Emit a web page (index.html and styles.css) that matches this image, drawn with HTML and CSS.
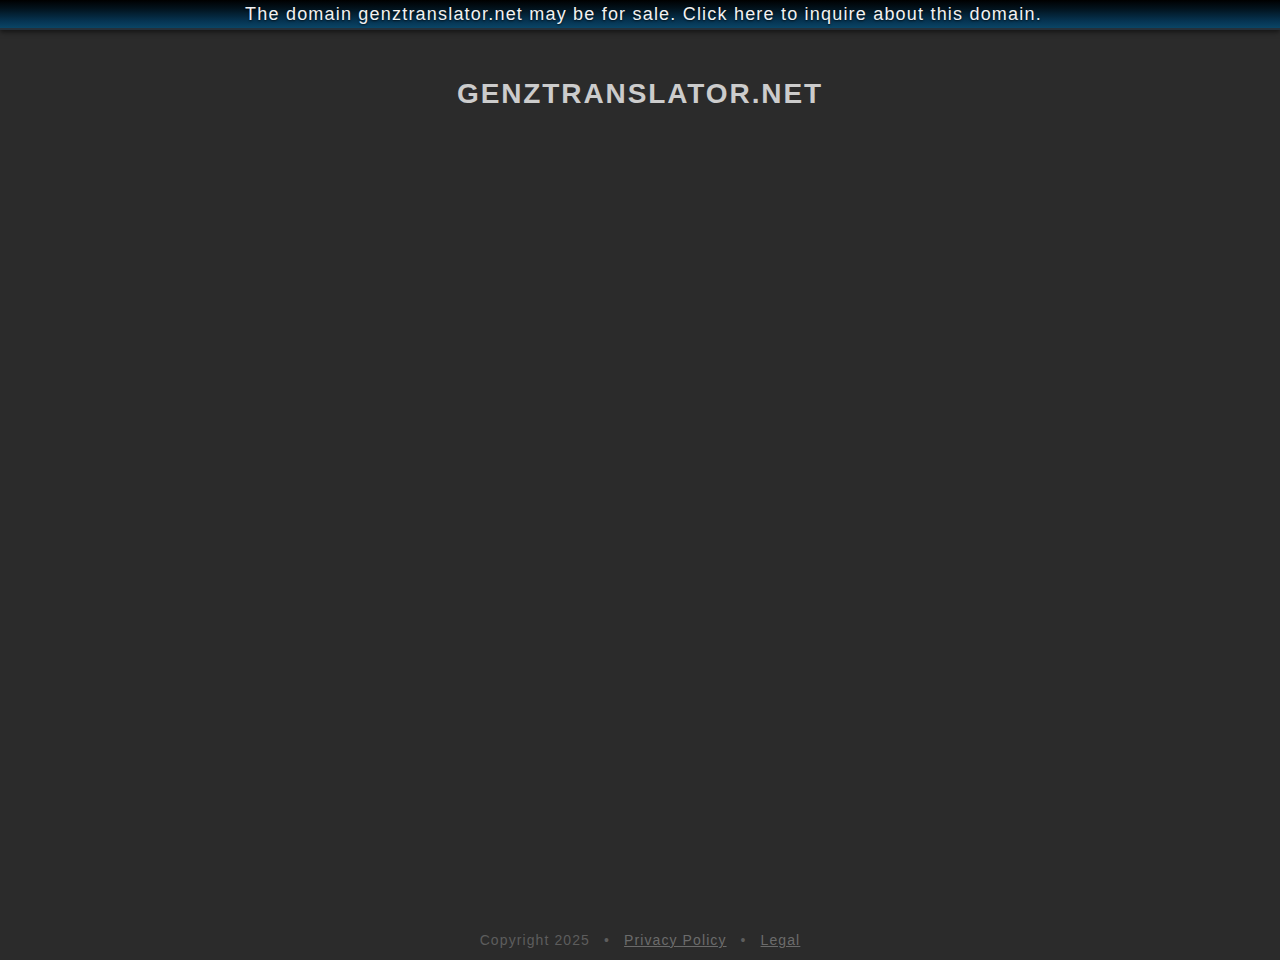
FILE: index.html
```html
<!DOCTYPE html>
<html>
<head>
<meta charset="utf-8">
<link rel="stylesheet" href="styles.css">
</head>
<body>
<div class="page">
  <a class="topbar" href="#">The domain genztranslator.net may be for sale. Click here to inquire about this domain.</a>
  <main class="main">
    <h1 class="title">GENZTRANSLATOR.NET</h1>
  </main>
  <footer class="footer">
    <span>Copyright 2025</span>
    <span class="dot">•</span>
    <a href="#">Privacy Policy</a>
    <span class="dot">•</span>
    <a href="#">Legal</a>
  </footer>
</div>
</body>
</html>
```
FILE: styles.css
```css
html, body {
  margin: 0;
  padding: 0;
  height: 100%;
  background: #2b2b2b;
  font-family: "Liberation Sans", Arial, sans-serif;
}
.page {
  min-height: 100vh;
  display: flex;
  flex-direction: column;
}
.topbar {
  display: block;
  height: 28px;
  line-height: 28px;
  padding-left: 7px;
  text-align: center;
  color: #f2f2f2;
  font-size: 18px;
  letter-spacing: 1.2px;
  text-decoration: none;
  background: linear-gradient(to bottom, #000000 0%, #02121c 30%, #063452 75%, #0a4566 100%);
  border-bottom: 2px solid #25303a;
  box-shadow: 0 2px 5px rgba(0,0,0,0.55);
  text-shadow: 0 1px 2px rgba(0,0,0,0.7);
  position: relative;
  z-index: 1;
}
.main {
  flex: 1;
  background: #2b2b2b;
}
.title {
  margin: 48px 0 0;
  text-align: center;
  color: #cccccc;
  font-size: 28px;
  font-weight: bold;
  letter-spacing: 1.9px;
  line-height: 32px;
}
.footer {
  display: flex;
  justify-content: center;
  gap: 14px;
  padding: 0 0 12px;
  font-size: 14px;
  letter-spacing: 1.1px;
  color: #5d5d5d;
  line-height: 16px;
}
.footer a {
  color: #6b6b6b;
  text-decoration: underline;
}
.dot {
  color: #5d5d5d;
}
```
